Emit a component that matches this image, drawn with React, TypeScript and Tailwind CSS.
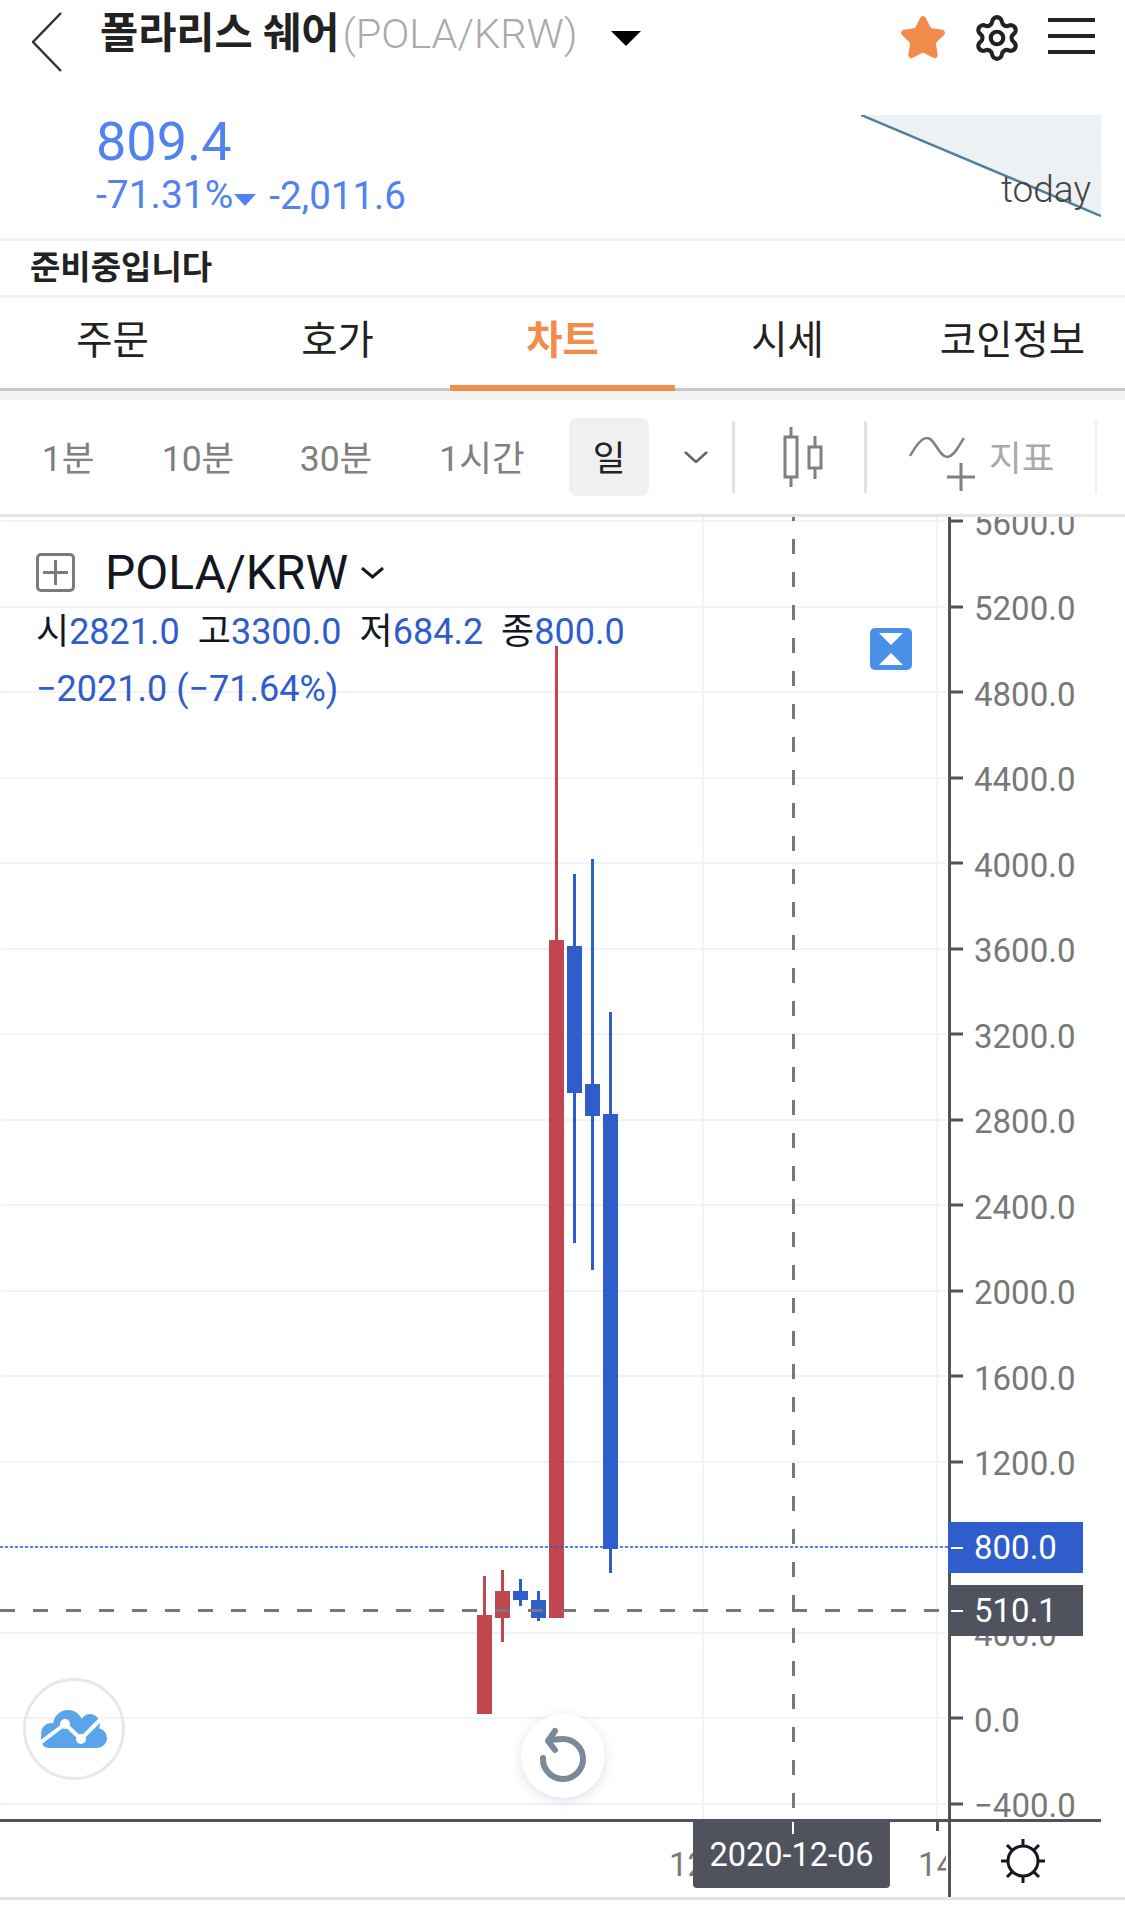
import React from 'react';
import { Settings, Star } from 'lucide-react';

const font = { fontFamily: 'Roboto, "Noto Sans CJK KR", sans-serif' };

const tabs = ['주문', '호가', '차트', '시세', '코인정보'];

// page coordinates are kept in the svg through its viewBox
const CHART_TOP = 517;
const priceY = (v: number) => 1718 - v * 0.21375;
const prices = [5600, 5200, 4800, 4400, 4000, 3600, 3200, 2800, 2400, 2000, 1600, 1200, 800, 400, 0, -400];

const candles = [
  { x: 477, top: 1615, bottom: 1714, high: 1576, low: 1714, up: true },
  { x: 495, top: 1591, bottom: 1618, high: 1570, low: 1642, up: true },
  { x: 513, top: 1591, bottom: 1600, high: 1579, low: 1606, up: false },
  { x: 531, top: 1600, bottom: 1618, high: 1591, low: 1621, up: false },
  { x: 549, top: 940, bottom: 1618, high: 646, low: 1618, up: true },
  { x: 567, top: 946, bottom: 1093, high: 874, low: 1243, up: false },
  { x: 585, top: 1084, bottom: 1116, high: 859, low: 1270, up: false },
  { x: 603, top: 1114, bottom: 1549, high: 1012, low: 1573, up: false },
];

const ChartDrawing = () => (
  <svg viewBox={`0 ${CHART_TOP} 1125 1380`} className="block w-full h-full">
    {prices.map((p) => (
      <rect key={p} x={1} y={Math.round(priceY(p)) - 1} width={945} height={2} fill="#f0f3fa" />
    ))}
    <rect x={702} y={517} width={2} height={1303} fill="#f0f3fa" />
    <rect x={936} y={517} width={2} height={1303} fill="#f0f3fa" />

    {candles.map((c) => {
      const color = c.up ? '#c1464f' : '#2f5dcc';
      return (
        <g key={c.x} fill={color}>
          <rect x={c.x + 6} y={c.high} width={3} height={c.low - c.high} />
          <rect x={c.x} y={c.top} width={15} height={c.bottom - c.top} />
        </g>
      );
    })}

    <line x1={0} y1={1547} x2={948} y2={1547} stroke="#2f5dcc" strokeWidth={1.5} strokeDasharray="3 2" />
    <line x1={0} y1={1610.5} x2={948} y2={1610.5} stroke="#787878" strokeWidth={3} strokeDasharray="15 18" />
    <line x1={793.5} y1={517} x2={793.5} y2={1820} stroke="#787878" strokeWidth={3} strokeDasharray="15 18" strokeDashoffset={-22} />

    <rect x={948} y={517} width={3} height={1380} fill="#50535e" />
    <rect x={0} y={1819} width={1101} height={3} fill="#50535e" />
    {prices.map((p) => (
      <rect key={p} x={951} y={Math.round(priceY(p)) - 1.5} width={12} height={3} fill="#50535e" />
    ))}
    <rect x={936} y={1820} width={3} height={11} fill="#50535e" />
  </svg>
);

const CloudLogo = () => (
  <svg viewBox="0 0 66 38" className="w-[66px] h-[38px]">
    <g fill="#5aa5ea">
      <circle cx={27} cy={15} r={15} />
      <circle cx={10} cy={23} r={10} />
      <circle cx={49} cy={14} r={10} />
      <circle cx={56} cy={28} r={10} />
      <rect x={0} y={20} width={60} height={18} rx={8} />
    </g>
    <polyline points="-1,33 24,14 40,29 60,9" fill="none" stroke="#fff" strokeWidth={4} />
    <circle cx={24} cy={14} r={5} fill="#fff" />
    <circle cx={40} cy={29} r={5} fill="#fff" />
  </svg>
);

const SunIcon = () => (
  <svg viewBox="0 0 46 46" className="w-[46px] h-[46px]" stroke="#131722" fill="none" strokeWidth={3}>
    <circle cx={23} cy={23} r={15} />
    <path d="M23 1v8M23 37v8M1 23h8M37 23h8M7 7l5 5M34 12l5-5M7 39l5-5M34 34l5 5" />
  </svg>
);

const IndicatorIcon = () => (
  <svg viewBox="0 0 68 58" className="w-[68px] h-[58px] mt-[18px] shrink-0" fill="none" stroke="#808080" strokeWidth={2.5}>
    <path d="M1 19 C6 10 12 1 18 1 C26 1 30 20 38 20 C45 20 50 8 55 1" />
    <path d="M52 26v28M38 40h28" strokeWidth={3} />
  </svg>
);

const CandleIcon = () => (
  <svg viewBox="0 0 46 60" className="w-[46px] h-[60px]" fill="none" stroke="#808080" strokeWidth={3}>
    <rect x={2} y={10} width={12} height={40} fill="#fff" />
    <path d="M8 0v10M8 50v10" />
    <rect x={26} y={20} width={12} height={21} fill="#fff" />
    <path d="M32 9v11M32 41v11" />
  </svg>
);

export default function App() {
  return (
    <div className="w-[1125px] h-[1915px] bg-white overflow-hidden" style={font}>
      {/* header */}
      <div className="h-[76px] flex items-start relative">
        <svg viewBox="0 0 30 60" className="w-[30px] h-[60px] ml-[32px] mt-[12px]" fill="none" stroke="#333" strokeWidth={2.5}>
          <polyline points="29,1 1,30 29,59" />
        </svg>
        <div className="ml-[38px] mt-[11px] flex items-baseline">
          <span className="text-[41.5px] leading-[46px] font-bold text-[#222]">폴라리스 쉐어</span>
          <span className="text-[41.5px] leading-[46px] font-light text-[#aaa] ml-[3px]">(POLA/KRW)</span>
        </div>
        <svg viewBox="0 0 30 15" className="w-[30px] h-[15px] ml-[33px] mt-[31px]">
          <polygon points="0,0 30,0 15,15" fill="#000" />
        </svg>
        <div className="ml-auto flex items-center mt-[13px] mr-[30px]">
          <Star size={48} fill="#f28c4b" stroke="#f28c4b" strokeWidth={2} />
          <Settings size={50} className="ml-[25px] text-[#222]" strokeWidth={2} />
          <div className="ml-[26px] mb-[5px] w-[47px] flex flex-col gap-[12px]">
            <div className="h-[4px] bg-[#222]" />
            <div className="h-[4px] bg-[#222]" />
            <div className="h-[4px] bg-[#222]" />
          </div>
        </div>
      </div>

      {/* quote */}
      <div className="h-[162px] pt-[39px] pl-[96px] pr-[24px] flex justify-between items-start">
        <div className="text-[#5282f0]">
          <div className="text-[54px] leading-[54px]">809.4</div>
          <div className="mt-[7px] text-[39px] leading-[39px] flex items-center">
            -71.31%
            <svg viewBox="0 0 22 12" className="w-[22px] h-[12px] ml-[1px] mt-[8px]">
              <polygon points="0,0 22,0 11,12" fill="#5282f0" />
            </svg>
            <span className="ml-[13px] text-[38.5px]">-2,011.6</span>
          </div>
        </div>
        <div className="relative w-[240px] h-[102px]">
          <svg viewBox="0 0 240 102" className="block w-full h-full">
            <polygon points="0,0 240,0 240,100" fill="#edf1f4" />
            <line x1={0} y1={0} x2={240} y2={101} stroke="#4f7f9f" strokeWidth={2.5} />
          </svg>
          <span className="absolute right-[10px] top-[55px] text-[37px] leading-[40px] font-light text-[#444]">today</span>
        </div>
      </div>

      <div className="h-[3px] bg-[#f2f2f2]" />
      <div className="h-[54px] pl-[30px] flex items-center text-[33px] font-bold text-[#222]">준비중입니다</div>
      <div className="h-[3px] bg-[#f2f2f2]" />

      {/* tabs */}
      <div className="h-[93px] flex border-b-[3px] border-[#c8c8c8]">
        {tabs.map((t) => (
          <div
            key={t}
            className={
              t === '차트'
                ? 'flex-1 h-[93px] flex items-center justify-center pb-[1px] text-[39.5px] font-bold text-[#f28c4b] border-b-[6px] border-[#f28c4b]'
                : 'flex-1 h-[90px] flex items-center justify-center pb-[4px] text-[39.5px] text-[#222]'
            }
          >
            {t}
          </div>
        ))}
      </div>
      <div className="h-[9px] bg-[#f3f3f3]" />

      {/* toolbar */}
      <div className="h-[114px] flex items-center text-[35.5px] text-[#808080]">
        <div className="w-[136px] pt-[6px] text-center">1분</div>
        <div className="w-[124px] pt-[6px] text-center">10분</div>
        <div className="w-[152px] pt-[6px] text-center">30분</div>
        <div className="w-[140px] pt-[6px] text-center">1시간</div>
        <div className="ml-[17px] w-[80px] h-[78px] pt-[6px] rounded-lg bg-[#f0f0f0] flex items-center justify-center text-[#222]">일</div>
        <div className="w-[83px] flex justify-end pr-[24px]">
          <svg viewBox="0 0 24 12" className="w-[24px] h-[12px]" fill="none" stroke="#666" strokeWidth={2.5}>
            <polyline points="1,1 12,11 23,1" />
          </svg>
        </div>
        <div className="w-[3px] h-[72px] bg-[#e3e3e3]" />
        <div className="w-[129px] pl-[48px] flex">
          <CandleIcon />
        </div>
        <div className="w-[3px] h-[72px] bg-[#e3e3e3]" />
        <div className="w-[228px] flex items-center pl-[42px]">
          <IndicatorIcon />
          <span className="ml-[12px] mt-[6px] text-[#aaa] whitespace-nowrap">지표</span>
        </div>
        <div className="w-[2px] h-[72px] bg-[#efefef]" />
      </div>
      <div className="h-[3px] bg-[#e5e5e5]" />

      {/* chart */}
      <div className="relative h-[1380px] overflow-hidden">
        <ChartDrawing />

        {/* legend */}
        <div className="absolute left-[36px] top-[36px]">
          <div className="flex items-center h-[39px]">
            <div className="w-[39px] h-[39px] rounded-[5px] border-[3px] border-[#787b86] flex items-center justify-center">
              <svg viewBox="0 0 25 25" className="w-[25px] h-[25px]" stroke="#787b86" strokeWidth={3}>
                <path d="M12.5 0v25M0 12.5h25" />
              </svg>
            </div>
            <span className="ml-[30px] text-[48px] leading-[39px] text-[#131722]">POLA/KRW</span>
            <svg viewBox="0 0 23 12" className="ml-[13px] w-[23px] h-[12px]" fill="none" stroke="#131722" strokeWidth={3}>
              <polyline points="1,1 11.5,10 22,1" />
            </svg>
          </div>
          <div className="mt-[19px] text-[36px] leading-[42px] text-[#2f5dcc] whitespace-nowrap">
            <span className="text-[#131722]">시</span>2821.0
            <span className="text-[#131722] ml-[18px]">고</span>3300.0
            <span className="text-[#131722] ml-[18px]">저</span>684.2
            <span className="text-[#131722] ml-[18px]">종</span>800.0
          </div>
          <div className="mt-[15px] text-[36px] leading-[42px] text-[#2f5dcc] whitespace-nowrap">−2021.0 (−71.64%)</div>
        </div>

        {/* hourglass */}
        <svg viewBox="0 0 42 42" className="absolute left-[870px] top-[111px] w-[42px] h-[42px]">
          <rect width={42} height={42} rx={5} fill="#4a90e8" />
          <polygon points="9,5 33,5 21,17" fill="#fff" />
          <polygon points="9,37 33,37 21,25" fill="#fff" />
        </svg>

        {/* price axis labels */}
        <div className="absolute left-[951px] top-0 w-[174px] h-[1302px] overflow-hidden">
          {prices.map((p) => (
            <div
              key={p}
              className="absolute left-[23px] text-[33px] leading-[40px] text-[#787878]"
              style={{ top: priceY(p) - CHART_TOP - 17.5 }}
            >
              {p < 0 ? '−' + Math.abs(p) : p}.0
            </div>
          ))}
        </div>
        <div className="absolute left-[948px] top-[1005px] w-[135px] h-[51px] bg-[#2f5dcc] flex items-center text-[33px] text-white">
          <div className="w-[12px] h-[2px] ml-[3px] bg-white" />
          <span className="ml-[11px]">800.0</span>
        </div>
        <div className="absolute left-[948px] top-[1068px] w-[135px] h-[51px] bg-[#50535e] flex items-center text-[33px] text-white">
          <div className="w-[12px] h-[2px] ml-[3px] bg-white" />
          <span className="ml-[11px]">510.1</span>
        </div>

        {/* time axis */}
        <div className="absolute left-0 top-[1305px] w-[946px] h-[70px] overflow-hidden text-[33px] leading-[40px] text-[#787878]">
          <span className="absolute left-[669px] top-[23px]">12</span>
          <span className="absolute left-[918px] top-[23px]">14</span>
        </div>
        <div className="absolute left-[693px] top-[1305px] w-[197px] h-[66px] rounded-b-[4px] bg-[#50535e] flex items-center justify-center text-[32.5px] text-white">
          2020-12-06
          <div className="absolute left-[99px] top-0 w-[2px] h-[12px] bg-white" />
        </div>
        <div className="absolute left-[1000px] top-[1321px]">
          <SunIcon />
        </div>

        {/* floating buttons */}
        <div className="absolute left-[23px] top-[1161px] w-[102px] h-[102px] rounded-full border-[3px] border-[#e8e8e8] flex items-center justify-center">
          <CloudLogo />
        </div>
        <div className="absolute left-[521px] top-[1197px] w-[84px] h-[84px] rounded-full bg-white shadow-[0_3px_12px_rgba(80,100,130,0.2)]">
          <svg viewBox="0 0 84 84" className="w-[84px] h-[84px]" fill="none" stroke="#7a8a9a" strokeWidth={6} strokeLinecap="round" strokeLinejoin="round">
            <path d="M22 44 A20 20 0 1 0 41 25 L28 26" />
            <path d="M34 17 L27 27 L34 36" />
          </svg>
        </div>
      </div>
      <div className="h-[3px] bg-[#e3e3e3]" />
    </div>
  );
}
